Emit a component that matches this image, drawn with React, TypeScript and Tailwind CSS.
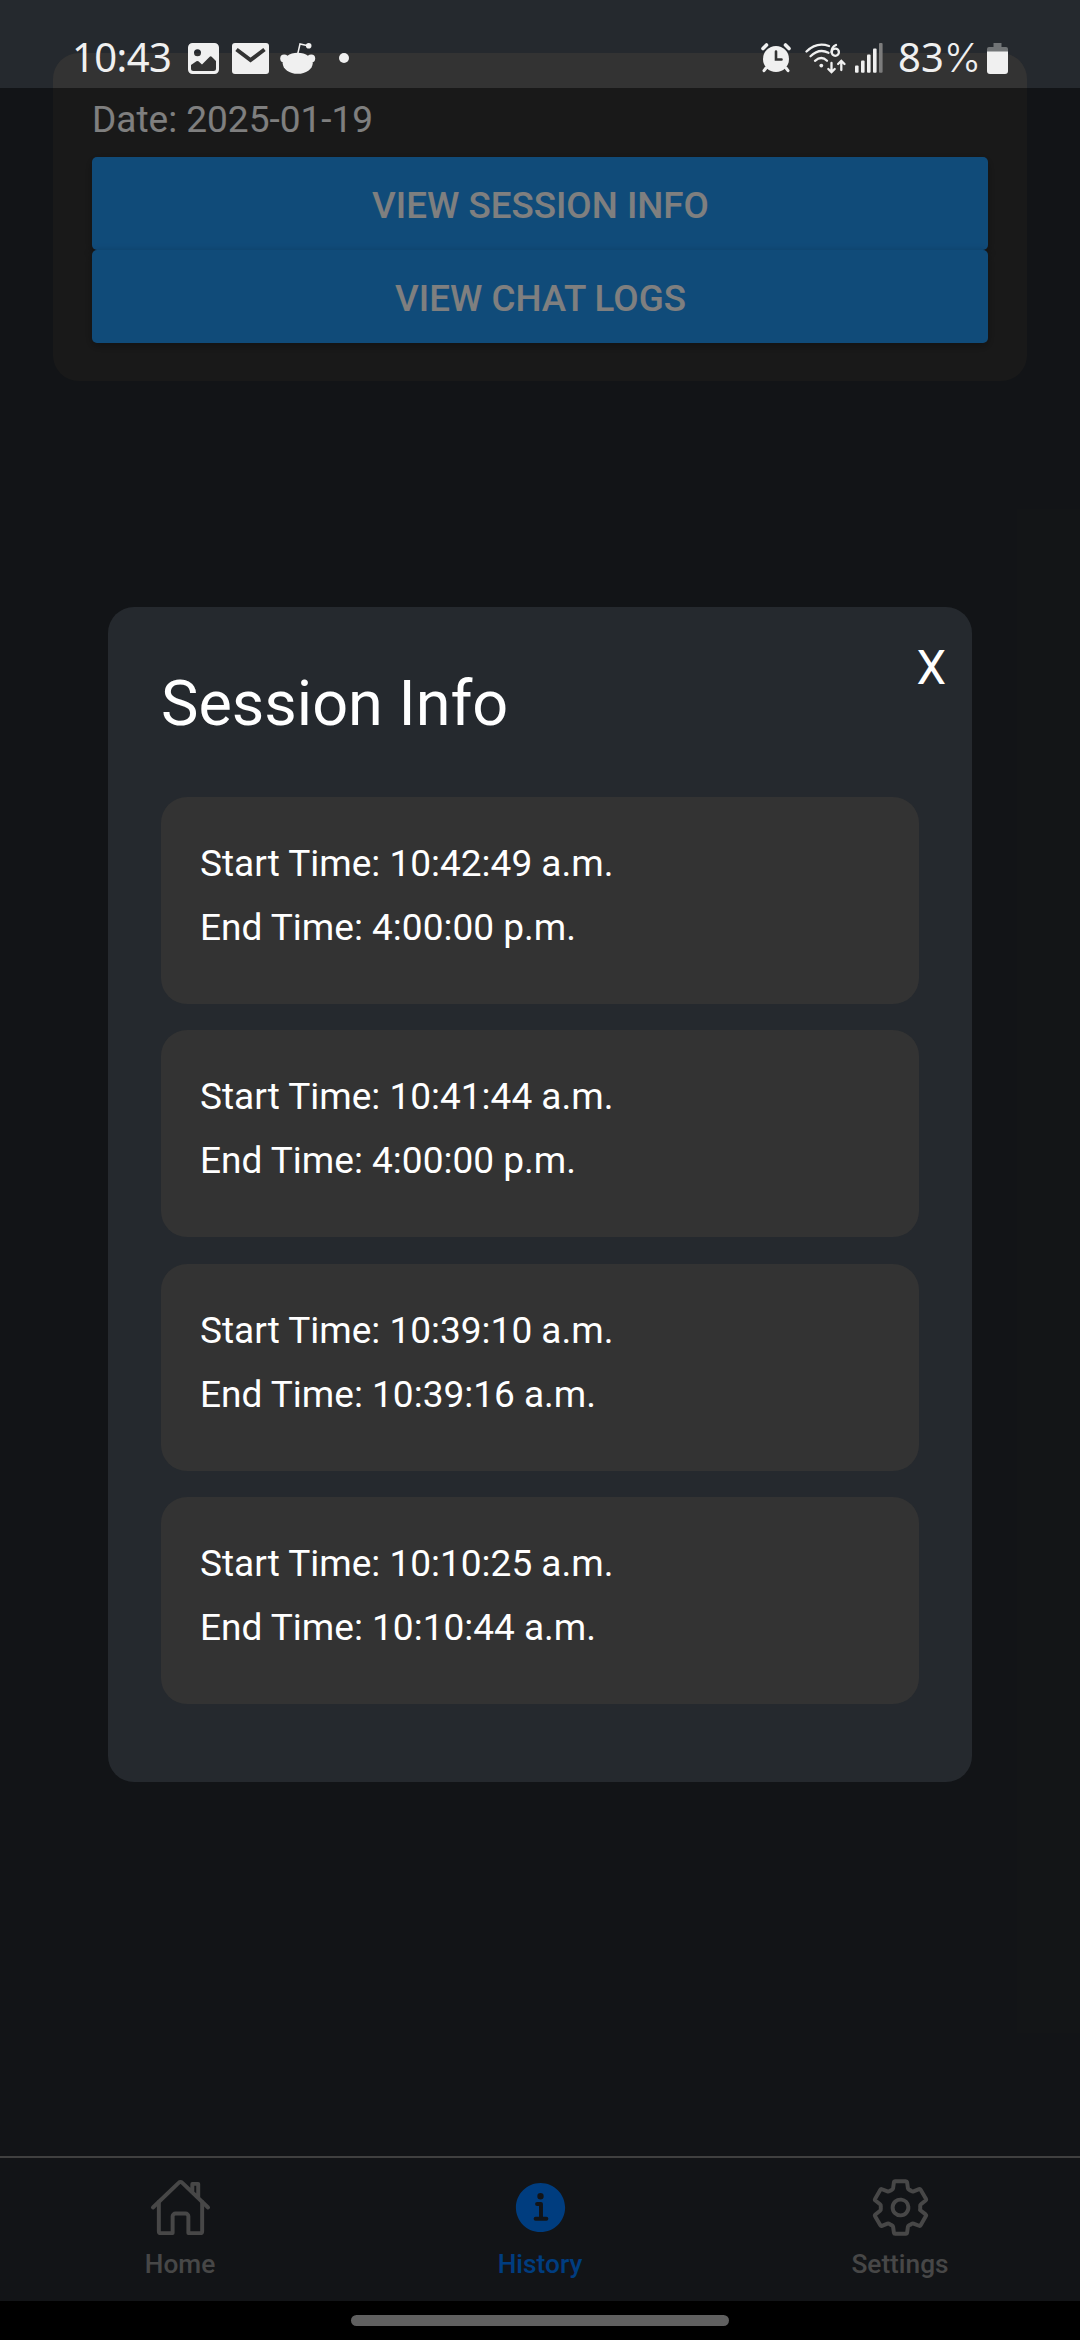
import { IoHomeOutline, IoInformationCircle, IoSettingsOutline } from "react-icons/io5";

type Session = { start: string; end: string };

const sessions: Session[] = [
  { start: "10:42:49 a.m.", end: "4:00:00 p.m." },
  { start: "10:41:44 a.m.", end: "4:00:00 p.m." },
  { start: "10:39:10 a.m.", end: "10:39:16 a.m." },
  { start: "10:10:25 a.m.", end: "10:10:44 a.m." },
];

function PictureIcon() {
  return (
    <svg className="block h-[31px] w-[31px]" viewBox="0 0 31 31">
      <path
        fill="#f0f0f0"
        fillRule="evenodd"
        d="M4.5 0h22A4.5 4.5 0 0 1 31 4.5v22a4.5 4.5 0 0 1-4.500 4.500h-22A4.500 4.500 0 0 1 0 26.500v-22A4.500 4.500 0 0 1 4.500 0ZM9.500 6.300a3.500 3.500 0 1 0 0 7 3.500 3.500 0 0 0 0-7ZM3 22v3.500Q3 28 5.500 28h20Q28 28 28 25.500V18l-4.300-4.300q-1-.9-2 0L14 21.500l-3.600-3.200q-1-.8-2 0Z"
      />
    </svg>
  );
}

function MailIcon() {
  return (
    <svg className="block h-[31px] w-[37px]" viewBox="0 0 37 31">
      <rect width="37" height="31" rx="3" fill="#f0f0f0" />
      <path d="M4.500 6.500 18.500 17 32.500 6.500" fill="none" stroke="#333" strokeWidth="4" />
    </svg>
  );
}

function RedditIcon() {
  return (
    <svg className="block h-[31px] w-[36px]" viewBox="0 0 36 31">
      <g fill="#f0f0f0">
        <ellipse cx="17.700" cy="20.300" rx="15" ry="10.500" />
        <circle cx="4.200" cy="15.500" r="4" />
        <circle cx="31.200" cy="15.500" r="4" />
        <circle cx="28.700" cy="2.800" r="2.800" />
      </g>
      <path d="M17.700 11 20 1l8 1.700" fill="none" stroke="#f0f0f0" strokeWidth="1.500" />
    </svg>
  );
}

function AlarmIcon() {
  return (
    <svg className="block h-[30px] w-[30px]" viewBox="0 0 30 30">
      <circle cx="15" cy="16" r="13" fill="#f0f0f0" />
      <g fill="none" stroke="#f0f0f0" strokeWidth="3.600" strokeLinecap="round">
        <path d="M2 5.500 5.500 2M28 5.500 24.500 2" />
        <path d="m5 25-2 2.700M25 25l2 2.700" strokeWidth="3" />
      </g>
      <path d="M15 8.500v8h5.500" fill="none" stroke="#333" strokeWidth="2.600" strokeLinecap="round" />
    </svg>
  );
}

function WifiIcon() {
  return (
    <svg className="block h-[31px] w-[42px]" viewBox="0 0 42 31" fill="none">
      <g stroke="#f0f0f0" strokeWidth="2.300" strokeLinecap="round">
        <path d="M1.500 8.500Q11.500-1.500 24 3" />
        <path d="M5.500 13.300Q14 5 23.500 9.800" />
        <path d="M10 17.800q6.500-5.500 12 0" />
        <path d="M31 2q-4.500 2-4.500 7" />
        <circle cx="30.300" cy="9.200" r="3.600" />
        <path d="M26.500 20v9m-3.200-3 3.200 3.200 3.200-3.200" />
        <path d="M36.300 27v-9m-3.200 3 3.200-3.200 3.200 3.200" />
      </g>
      <circle cx="16.300" cy="22.600" r="1.900" fill="#f0f0f0" />
    </svg>
  );
}

function SignalIcon() {
  return (
    <svg className="block h-[30px] w-[28px]" viewBox="0 0 28 30" fill="#f0f0f0">
      <rect x="0" y="22.500" width="3.600" height="7.200" rx="1" />
      <rect x="6" y="17.500" width="3.600" height="12.200" rx="1" />
      <rect x="12" y="11.500" width="3.600" height="18.200" rx="1" />
      <rect x="18" y="5.500" width="3.600" height="24.200" rx="1" />
      <rect x="24" y="0" width="3.600" height="29.700" rx="1" fill="#7c7c7c" />
    </svg>
  );
}

function BatteryIcon() {
  return (
    <svg className="block h-[31px] w-[21px]" viewBox="0 0 21 31">
      <path d="M6.500 0h8v4H19a2 2 0 0 1 2 2v3H0V6a2 2 0 0 1 2-2h4.500Z" fill="#717476" />
      <path d="M0 8.500h21V28a3 3 0 0 1-3 3H3a3 3 0 0 1-3-3Z" fill="#f0f0f0" />
    </svg>
  );
}

function StatusBar() {
  return (
    <div className="absolute inset-x-0 top-0 flex h-[88px] items-start pt-[43px] pr-[72px] pl-[72px] font-['Noto_Sans',sans-serif] text-[40px] leading-[27px] text-[#f0f0f0]">
      <span className="w-[116px] tracking-[-0.6px] whitespace-nowrap">10:43</span>
      <PictureIcon />
      <div className="ml-[13px]"><MailIcon /></div>
      <div className="ml-[11px]"><RedditIcon /></div>
      <div className="mt-[10px] ml-[23px] h-[10px] w-[10px] rounded-full bg-[#f0f0f0]" />
      <div className="ml-auto flex items-start">
        <AlarmIcon />
        <div className="ml-[14px]"><WifiIcon /></div>
        <div className="ml-[8px]"><SignalIcon /></div>
        <span className="ml-[15px] w-[89px] whitespace-nowrap">
          83<span className="font-[Inter,sans-serif] font-light">%</span>
        </span>
        <BatteryIcon />
      </div>
    </div>
  );
}

function ActionButton({ label }: { label: string }) {
  return (
    <button className="block h-[93px] w-full rounded-[5px] bg-[#2196f3] pt-[4px] pl-px text-[36.75px] font-medium text-white shadow-[0_3px_10px_rgba(0,0,0,0.3)]">
      {label}
    </button>
  );
}

function SessionCard({ start, end }: Session) {
  return (
    <div className="h-[207px] rounded-[26px] bg-[#333333] px-[39px] pt-[35px] text-[37px] leading-[64px] text-white">
      <p>Start Time: {start}</p>
      <p>End Time: {end}</p>
    </div>
  );
}

export default function App() {
  return (
    <div className="relative flex h-[2340px] w-[1080px] flex-col overflow-hidden bg-[#25292e] font-[Roboto,sans-serif]">
      <main className="flex-1 px-[53px] pt-[53px]">
        <section className="h-[328px] rounded-[26px] bg-[#333333] px-[39px] pt-[41px] text-white">
          <p className="mb-[11px] text-[37px] leading-[52px]">Date: 2025-01-19</p>
          <ActionButton label="VIEW SESSION INFO" />
          <ActionButton label="VIEW CHAT LOGS" />
        </section>
      </main>
      <nav className="grid h-[145px] grid-cols-3 border-t-2 border-[#808080] text-[26.25px] leading-[34px] font-medium text-[#8e8e8f]">
        <div className="flex flex-col items-center pt-[18px]">
          <IoHomeOutline size={63} />
          <span className="mt-[8px]">Home</span>
        </div>
        <div className="flex flex-col items-center pt-[18px] text-[#007aff]">
          <IoInformationCircle size={63} />
          <span className="mt-[8px]">History</span>
        </div>
        <div className="flex flex-col items-center pt-[18px]">
          <IoSettingsOutline size={63} />
          <span className="mt-[8px]">Settings</span>
        </div>
      </nav>
      <div className="flex h-[39px] justify-center bg-black pt-[14px]">
        <div className="h-[11px] w-[378px] rounded-full bg-[#606060]" />
      </div>
      <div className="absolute inset-x-0 top-[88px] bottom-[39px] bg-black/50 px-[108px] pt-[519px]">
        <div className="relative flex h-[1175px] flex-col rounded-[26px] bg-[#25292e] px-[53px] pt-[55px] text-white">
          <h1 className="mb-[51px] h-[84px] text-[63px] leading-[84px]">Session Info</h1>
          <button className="absolute top-[33px] right-[26px] text-[47.25px] leading-[56px]">X</button>
          <div className="flex flex-col gap-[26.3px]">
            {sessions.map((s) => (
              <SessionCard key={s.start} {...s} />
            ))}
          </div>
        </div>
      </div>
      <StatusBar />
    </div>
  );
}
